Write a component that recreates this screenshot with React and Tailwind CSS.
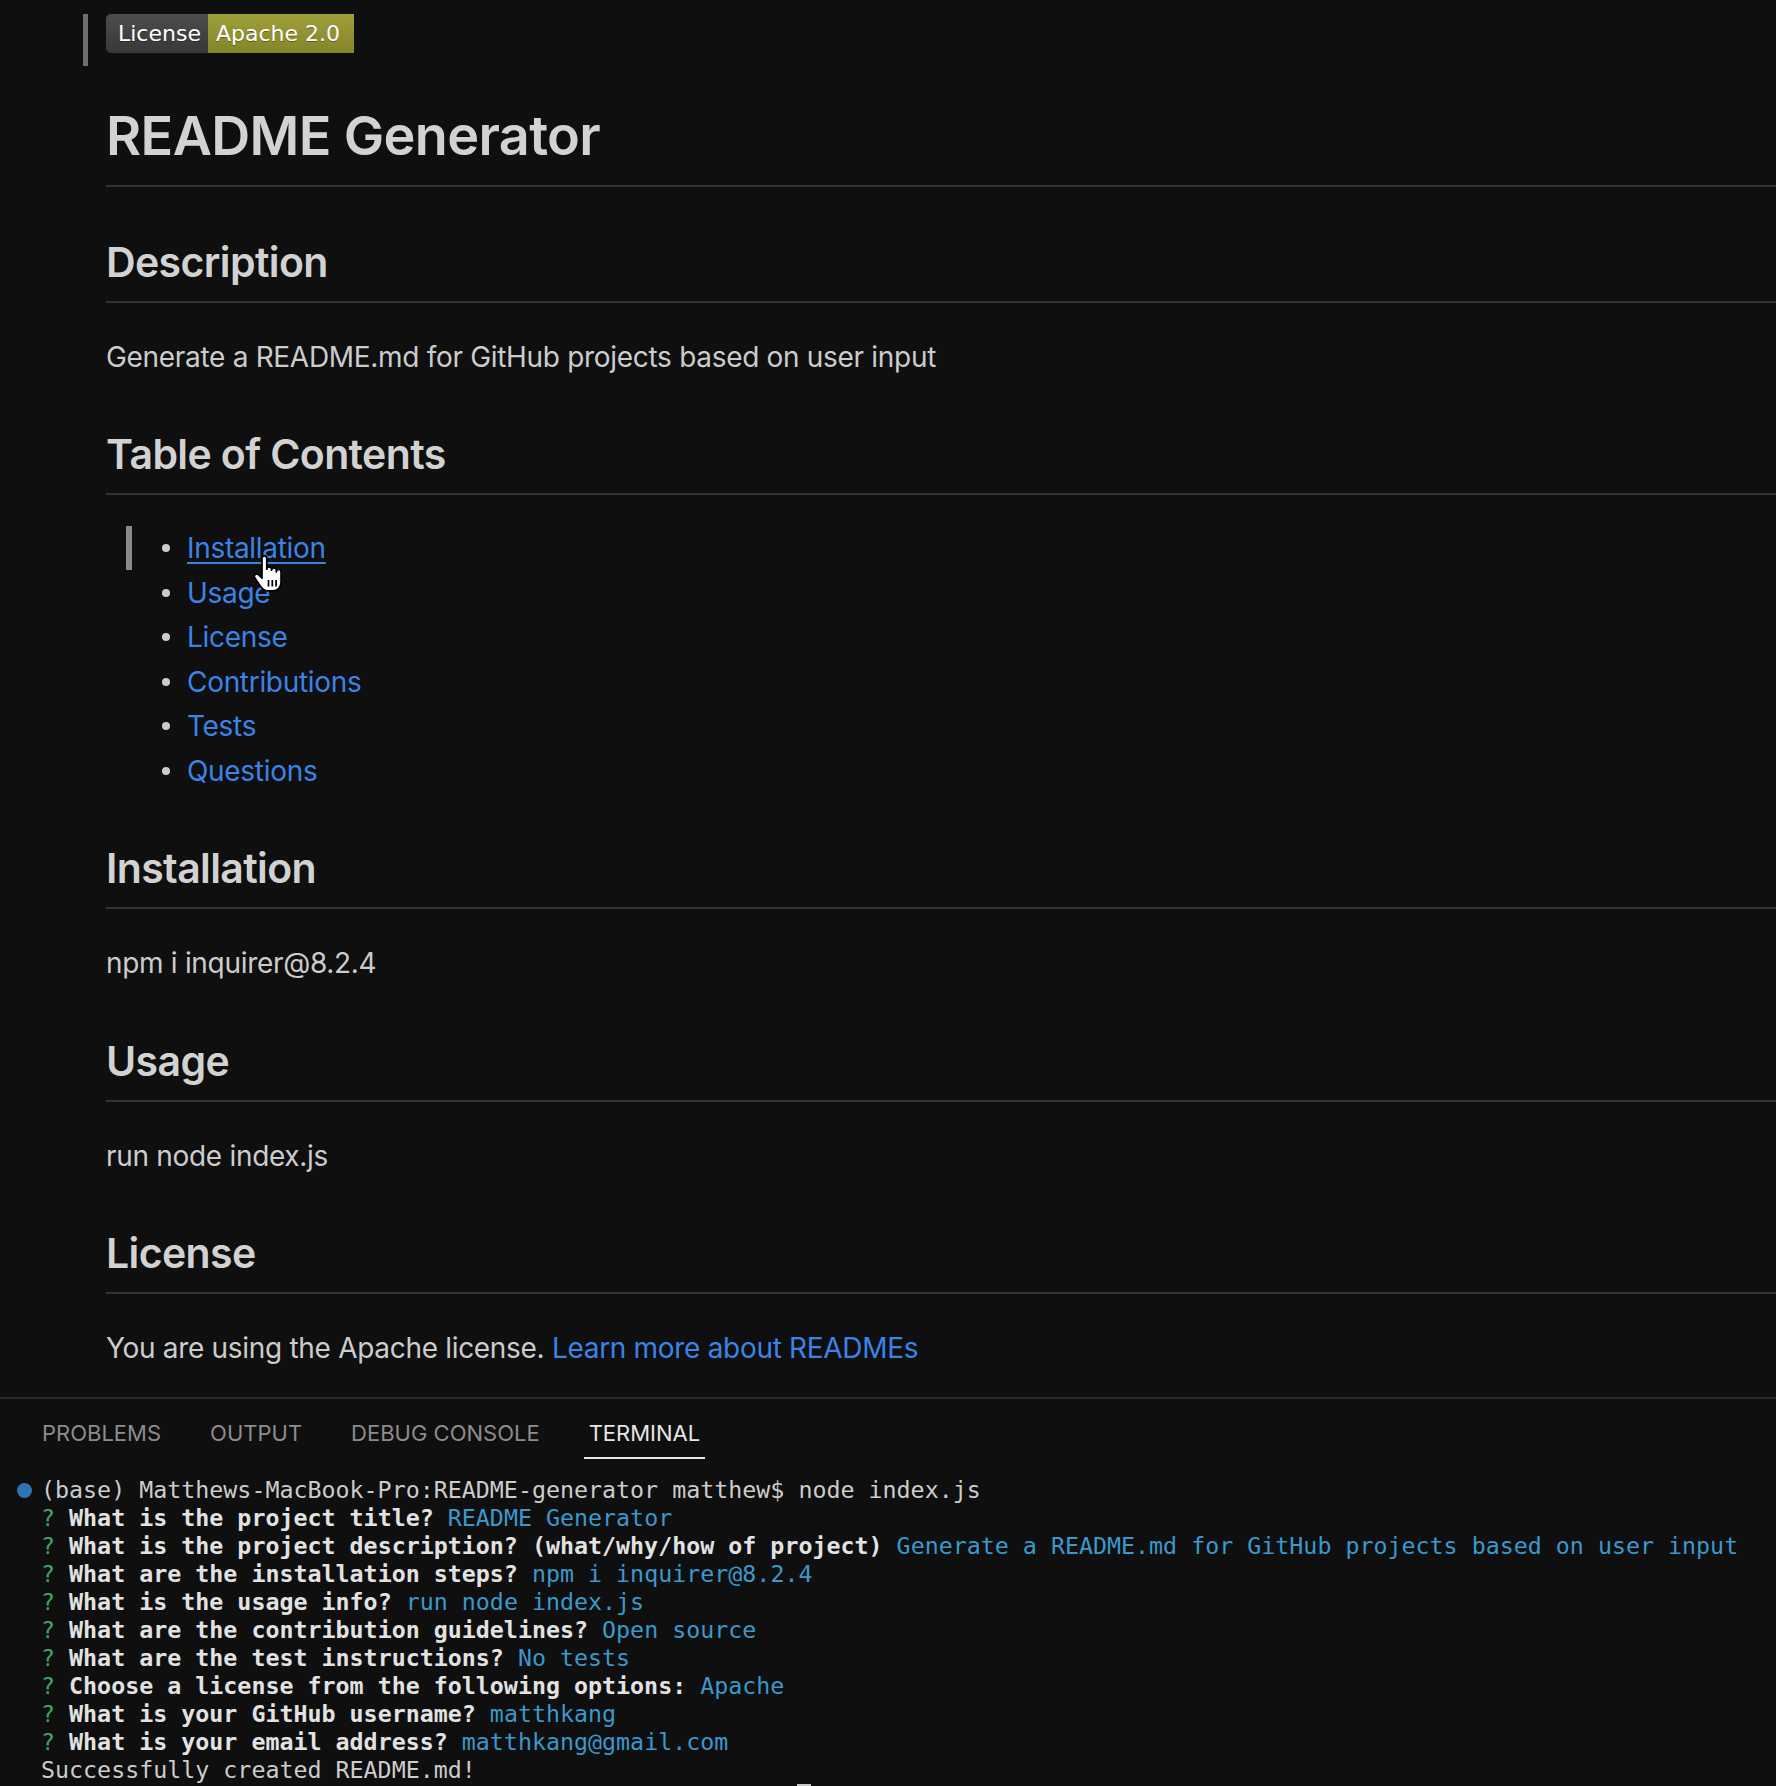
import React from 'react';

const toc = ['Installation', 'Usage', 'License', 'Contributions', 'Tests', 'Questions'];

const qa = [
  ['What is the project title?', 'README Generator'],
  ['What is the project description? (what/why/how of project)', 'Generate a README.md for GitHub projects based on user input'],
  ['What are the installation steps?', 'npm i inquirer@8.2.4'],
  ['What is the usage info?', 'run node index.js'],
  ['What are the contribution guidelines?', 'Open source'],
  ['What are the test instructions?', 'No tests'],
  ['Choose a license from the following options:', 'Apache'],
  ['What is your GitHub username?', 'matthkang'],
  ['What is your email address?', 'matthkang@gmail.com'],
];

function Badge() {
  return (
    <div className="flex h-[39px] overflow-hidden rounded-[5px] font-['DejaVu_Sans',sans-serif] text-[22px] leading-[39px] text-white [text-shadow:0_1px_0_rgba(0,0,0,0.35)]">
      <span className="w-[102px] bg-gradient-to-b from-[#4d4d4d] to-[#383838] pl-[12px]">License</span>
      <span className="w-[146px] bg-gradient-to-b from-[#a0a03a] to-[#84842a] pl-[8px]">Apache 2.0</span>
    </div>
  );
}

function H2({ children }) {
  return (
    <h2 className="mt-[48.5px] border-b-2 border-[#333333] pb-[13px] text-[41px] font-semibold leading-[52px] tracking-[-0.015em] text-[#d2d2d2]">
      {children}
    </h2>
  );
}

function P({ children }) {
  return <p className="mt-[32px] text-[28px] leading-[45px] tracking-[-0.011em]">{children}</p>;
}

function HandCursor() {
  return (
    <svg className="absolute left-[251px] top-[554px]" width="35" height="39" viewBox="0 0 32 36">
      <path
        d="M10 4 a2.2 2.2 0 0 1 4.4 0 v10 a2.2 2.2 0 0 1 4.4 0 v1 a2.2 2.2 0 0 1 4.4 0 v1.5 a2.2 2.2 0 0 1 4.4 0 V26 c0 4.5 -3 8 -7.5 8 h-5 c-3.2 0 -5 -1.8 -6.8 -4.8 l-5 -7.2 a2.3 2.3 0 0 1 3.4 -3 l3.3 3.4 Z"
        fill="#ffffff"
        stroke="#000000"
        strokeWidth="1.6"
        strokeLinejoin="round"
      />
      <path d="M16 24 v6 M19.5 24 v6 M23 24 v6" stroke="#000000" strokeWidth="1.6" />
    </svg>
  );
}

export default function App() {
  return (
    <div className="relative h-[1786px] w-full overflow-hidden bg-[#0f0f0f]">
      {/* markdown preview */}
      <div className="relative h-[1397px] overflow-hidden pl-[106px] font-['Inter',sans-serif] text-[#cccccc]">
        <div className="relative mt-[14px] h-[52px]">
          <span className="absolute left-[-23px] top-0 h-[52px] w-[5px] bg-[#6e6e6e]" />
          <Badge />
        </div>

        <h1 className="mt-[36px] border-b-2 border-[#333333] pb-[15px] text-[54px] font-semibold leading-[68px] tracking-[-0.012em] text-[#d2d2d2]">
          README Generator
        </h1>

        <H2>Description</H2>
        <P>Generate a README.md for GitHub projects based on user input</P>

        <H2>Table of Contents</H2>
        <ul className="mt-[31px] pl-[81px] text-[28px] leading-[44.6px] tracking-[-0.011em]">
          {toc.map((item, i) => (
            <li key={item} className="relative">
              {i === 0 && <span className="absolute left-[-61px] top-0 h-[44px] w-[6px] bg-[#8a8a8a]" />}
              <span className="absolute left-[-25px] top-[18px] h-[8px] w-[8px] rounded-full bg-[#cccccc]" />
              <a className={i === 0 ? 'text-[#3b83e6] underline decoration-2 underline-offset-[4px]' : 'text-[#3b83e6]'}>
                {item}
              </a>
            </li>
          ))}
        </ul>

        <H2>Installation</H2>
        <P>npm i inquirer@8.2.4</P>

        <H2>Usage</H2>
        <P>run node index.js</P>

        <H2>License</H2>
        <P>
          You are using the Apache license. <a className="text-[#3b83e6]">Learn more about READMEs</a>
        </P>

        <HandCursor />
      </div>

      {/* panel */}
      <div className="border-t-2 border-[#2a2a2a]">
        <div className="flex gap-[39px] pl-[37px] pt-[19px] font-['Inter',sans-serif] text-[22px] leading-[30px]">
          {['PROBLEMS', 'OUTPUT', 'DEBUG CONSOLE', 'TERMINAL'].map((t) => (
            <div key={t} className="flex flex-col px-[5px]">
              <span className={t === 'TERMINAL' ? 'text-[#e6e6e6]' : 'text-[#8c8c8c]'}>{t}</span>
              <span className={t === 'TERMINAL' ? 'mt-[9px] h-[2px] bg-[#e6e6e6] -mx-[5px]' : 'mt-[9px] h-[2px]'} />
            </div>
          ))}
        </div>

        <div className="relative mt-[17px] whitespace-pre pl-[41px] font-['DejaVu_Sans_Mono',monospace] text-[23.3px] leading-[28px] text-[#cccccc]">
          <span className="absolute left-[17px] top-[7px] h-[15px] w-[15px] rounded-full bg-[#2f75b3]" />
          <div>(base) Matthews-MacBook-Pro:README-generator matthew$ node index.js</div>
          {qa.map(([q, a]) => (
            <div key={q}>
              <span className="text-[#3fa35e]">?</span>{' '}
              <span className="font-bold text-[#e2e2e2]">{q}</span>{' '}
              <span className="text-[#3a98cc]">{a}</span>
            </div>
          ))}
          <div>Successfully created README.md!</div>
          <div className="h-[28px]">
            <span className="ml-[756px] block h-[28px] w-[14px] bg-[#c8c8c8]" />
          </div>
        </div>
      </div>
    </div>
  );
}
